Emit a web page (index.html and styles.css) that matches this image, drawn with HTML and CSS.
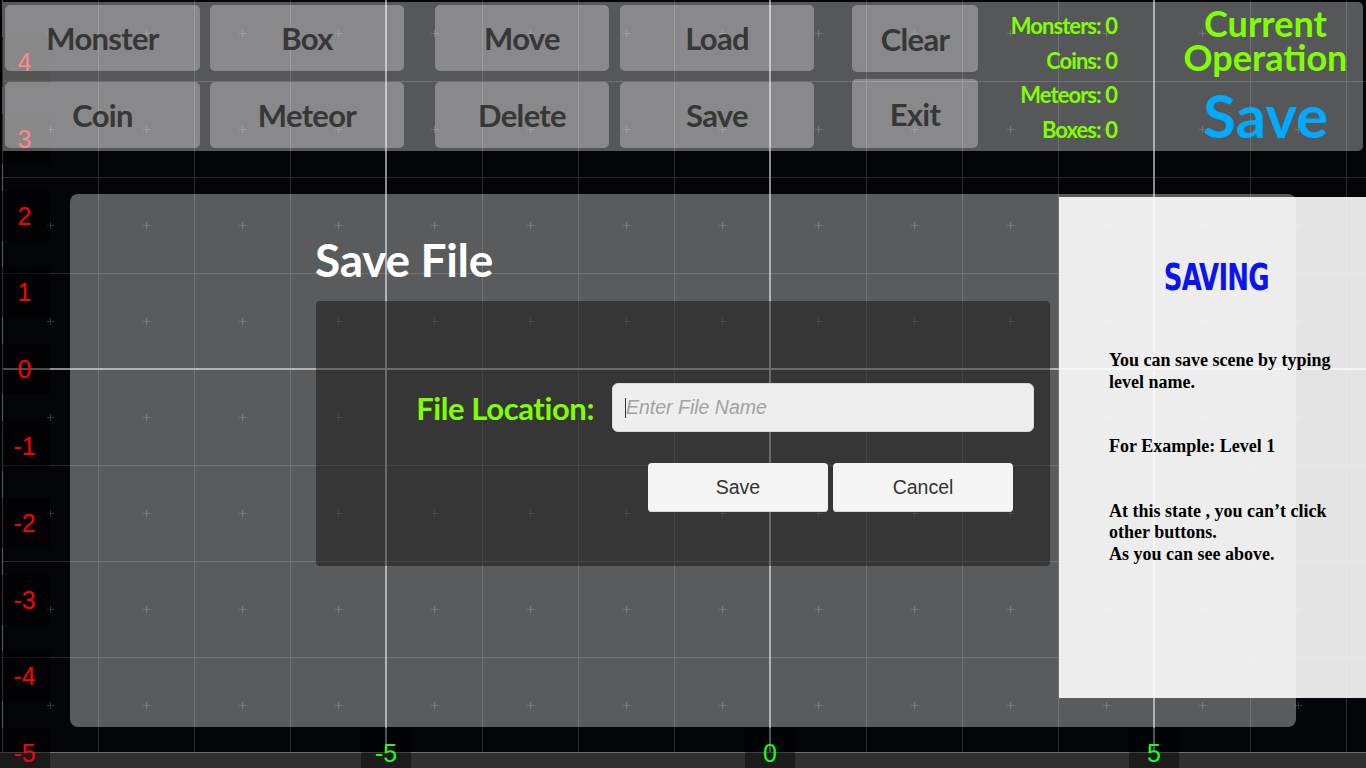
FILE: index.html
```html
<!DOCTYPE html>
<html lang="en">
<head>
<meta charset="utf-8">
<title>Level Editor - Save</title>
<link rel="stylesheet" href="styles.css">
</head>
<body>
<div class="scene">
  <svg class="grid" width="1366" height="768" viewBox="0 0 1366 768">
    <defs>
      <pattern id="plus" x="46" y="29" width="96" height="96" patternUnits="userSpaceOnUse">
        <path d="M1 4.5H8M4.5 1V8" stroke="#343436" stroke-width="1" fill="none"/>
      </pattern>
    </defs>
    <rect x="0" y="0" width="1366" height="752" fill="url(#plus)"/>
    <path d="M98.5 0V752M194.5 0V752M290.5 0V752M482.5 0V752M578.5 0V752M674.5 0V752M866.5 0V752M962.5 0V752M1058.5 0V752M1250.5 0V752M1346.5 0V752M2 81.5H1366M2 177.5H1366M2 273.5H1366M2 465.5H1366M2 561.5H1366M2 657.5H1366" stroke="#2c2c2e" stroke-width="1" fill="none"/>
    <path d="M386 0V752M770 0V752M1154 0V752M2 369H1366" stroke="#8a8a8a" stroke-width="2" fill="none"/>
    <path d="M2.5 0V752" stroke="#5a5a5a" stroke-width="1"/>
    <rect x="0" y="752" width="1366" height="16" fill="#303030"/>
    <path d="M0 752.5H1366" stroke="#707070" stroke-width="1"/>
  </svg>

  <div class="yaxis">
    <div class="ytick"><span>4</span></div>
    <div class="ytick"><span>3</span></div>
    <div class="ytick"><span>2</span></div>
    <div class="ytick"><span>1</span></div>
    <div class="ytick"><span>0</span></div>
    <div class="ytick"><span>-1</span></div>
    <div class="ytick"><span>-2</span></div>
    <div class="ytick"><span>-3</span></div>
    <div class="ytick"><span>-4</span></div>
    <div class="ytick"><span>-5</span></div>
  </div>

  <div class="xaxis">
    <div class="xtick">-5</div>
    <div class="xtick">0</div>
    <div class="xtick">5</div>
  </div>

  <header class="toolbar">
    <div class="btn-group g1">
      <button class="tool">Monster</button>
      <button class="tool">Box</button>
      <button class="tool">Coin</button>
      <button class="tool">Meteor</button>
    </div>
    <div class="btn-group g2">
      <button class="tool">Move</button>
      <button class="tool">Load</button>
      <button class="tool">Delete</button>
      <button class="tool">Save</button>
    </div>
    <div class="btn-col">
      <button class="tool clear">Clear</button>
      <button class="tool exit">Exit</button>
    </div>
    <div class="stats">
      <div>Monsters:&nbsp;0</div>
      <div>Coins:&nbsp;0</div>
      <div>Meteors:&nbsp;0</div>
      <div>Boxes:&nbsp;0</div>
    </div>
    <div class="current">
      <div class="current-title">Current</div>
      <div class="current-title">Operation</div>
      <div class="current-op">Save</div>
    </div>
  </header>

  <section class="dialog">
    <h1 class="dialog-title">Save File</h1>
    <div class="dialog-body">
      <div class="field-row">
        <label class="field-label">File Location:</label>
        <div class="text-input"><span class="caret"></span><span class="placeholder">Enter File Name</span></div>
      </div>
      <div class="action-row">
        <button class="action">Save</button>
        <button class="action">Cancel</button>
      </div>
    </div>
  </section>

  <aside class="info">
    <h2 class="info-title"><span class="info-title-text">SAVING</span></h2>
    <div class="info-text">
      <p>You can save scene by typing level name.</p>
      <p>For Example: Level 1</p>
      <p>At this state , you can’t click other buttons.<br>As you can see above.</p>
    </div>
  </aside>
</div>
</body>
</html>
```
FILE: styles.css
```css
* { box-sizing: border-box; }
html, body { margin: 0; padding: 0; }
body {
  width: 1366px;
  height: 768px;
  overflow: hidden;
  background: #040508;
  font-family: Lato, "Open Sans", sans-serif;
}
.scene {
  position: relative;
  width: 1366px;
  height: 768px;
  overflow: hidden;
}
.grid {
  position: absolute;
  left: 0;
  top: 0;
  display: block;
}

/* axes */
.yaxis {
  position: absolute;
  left: 0;
  top: 23.6px;
  width: 50px;
  display: flex;
  flex-direction: column;
}
.ytick {
  height: 76.8px;
  display: flex;
  align-items: center;
}
.ytick span {
  width: 50px;
  height: 50px;
  line-height: 50px;
  text-align: center;
  background: rgba(0, 0, 0, 0.45);
  color: #ff0000;
  font-family: "Liberation Sans", Arial, sans-serif;
  font-size: 25px;
  padding-right: 1px;
}
.xaxis {
  position: absolute;
  left: 361px;
  top: 728px;
  display: flex;
  gap: 334px;
}
.xtick {
  width: 50px;
  height: 40px;
  line-height: 50px;
  text-align: center;
  background: rgba(0, 0, 0, 0.4);
  color: #1aff1a;
  font-family: "Liberation Sans", Arial, sans-serif;
  font-size: 25px;
}

/* toolbar */
.toolbar {
  position: relative;
  z-index: 2;
  margin: 2px 3px 0 3px;
  height: 149px;
  background: rgba(255, 255, 255, 0.33);
  border-radius: 0 5px 5px 0;
  display: flex;
  align-items: flex-start;
  padding: 3px 0 0 2px;
}
.btn-group {
  display: grid;
  grid-template-rows: 66px 66px;
  row-gap: 11px;
}
.g1 {
  grid-template-columns: 195px 194px;
  column-gap: 10px;
}
.g2 {
  margin-left: 31px;
  grid-template-columns: 174px 194px;
  column-gap: 11px;
}
.tool {
  margin: 0;
  padding: 0;
  border: none;
  border-radius: 5px;
  background: rgba(255, 255, 255, 0.3);
  color: #373737;
  font-family: Lato, "Open Sans", sans-serif;
  font-weight: 700;
  font-size: 31px;
  letter-spacing: -0.7px;
  display: flex;
  align-items: center;
  justify-content: center;
}
.btn-col {
  margin-left: 38px;
  width: 126px;
  height: 143px;
  display: flex;
  flex-direction: column;
  justify-content: space-between;
}
.clear { height: 67px; }
.exit { height: 69px; }

.stats {
  width: 139px;
  margin-top: 4px;
  text-align: right;
  color: #80ff00;
  font-weight: 700;
  font-size: 22px;
  line-height: 34.7px;
  letter-spacing: -0.95px;
}
.current {
  margin-left: 51px;
  width: 195px;
  text-align: center;
}
.current-title {
  color: #80ff00;
  font-weight: 700;
  font-size: 36px;
  line-height: 34px;
}
.current-title:first-child {
  margin-top: 1px;
}
.current-op {
  margin-top: 11px;
  color: #00aaff;
  font-weight: 700;
  font-size: 60px;
  line-height: 60px;
}

/* dialog */
.dialog {
  position: absolute;
  z-index: 3;
  left: 70px;
  top: 194px;
  width: 1226px;
  height: 533px;
  border-radius: 8px;
  background: rgba(255, 255, 255, 0.345);
  padding-left: 245px;
}
.dialog-title {
  margin: 38px 0 0 0;
  height: 56px;
  line-height: 56px;
  color: #ffffff;
  font-weight: 700;
  font-size: 46px;
  letter-spacing: -0.3px;
}
.dialog-body {
  margin-top: 13px;
  margin-left: 1px;
  width: 734px;
  height: 265px;
  border-radius: 4px;
  background: rgba(0, 0, 0, 0.4);
  padding-top: 82px;
}
.field-row {
  display: grid;
  grid-template-columns: 278px 422px;
  column-gap: 18px;
  align-items: center;
}
.field-label {
  text-align: right;
  color: #80ff00;
  font-weight: 700;
  font-size: 31px;
  letter-spacing: -0.4px;
}
.text-input {
  height: 49px;
  border-radius: 6px;
  background: #eeeeee;
  border: 1px solid #d8d8d8;
  display: flex;
  align-items: center;
  padding-left: 12px;
}
.caret {
  width: 1px;
  height: 20px;
  background: #333;
}
.placeholder {
  color: #a2a2a2;
  font-family: "Liberation Sans", Arial, sans-serif;
  font-style: italic;
  font-size: 19.5px;
}
.action-row {
  margin-top: 31px;
  padding-left: 332px;
  display: flex;
  gap: 5px;
}
.action {
  margin: 0;
  width: 180px;
  height: 49px;
  border: none;
  border-radius: 4px;
  background: #f4f4f4;
  box-shadow: inset 0 -1px 0 #d6d6d6;
  color: #333333;
  font-family: "Liberation Sans", Arial, sans-serif;
  font-size: 19.5px;
}

/* info panel */
.info {
  position: absolute;
  z-index: 4;
  left: 1059px;
  top: 197px;
  width: 307px;
  height: 501px;
  background: rgba(255, 255, 255, 0.894);
  padding-top: 61px;
}
.info-title {
  margin: 0;
  padding-left: 7px;
  height: 40px;
  line-height: 40px;
  text-align: center;
  color: #0a14f0;
  font-family: "DejaVu Sans Condensed", "DejaVu Sans", sans-serif;
  font-weight: 700;
  font-size: 37px;
  letter-spacing: -1px;
}
.info-title-text {
  display: inline-block;
  transform: scaleX(0.78);
}
.info-text {
  margin-top: 52px;
  margin-left: 50px;
  width: 235px;
  color: #000;
  font-family: "Liberation Serif", "Times New Roman", serif;
  font-weight: 700;
  font-size: 18px;
  line-height: 21.5px;
}
.info-text p {
  margin: 0 0 43px 0;
}
```
